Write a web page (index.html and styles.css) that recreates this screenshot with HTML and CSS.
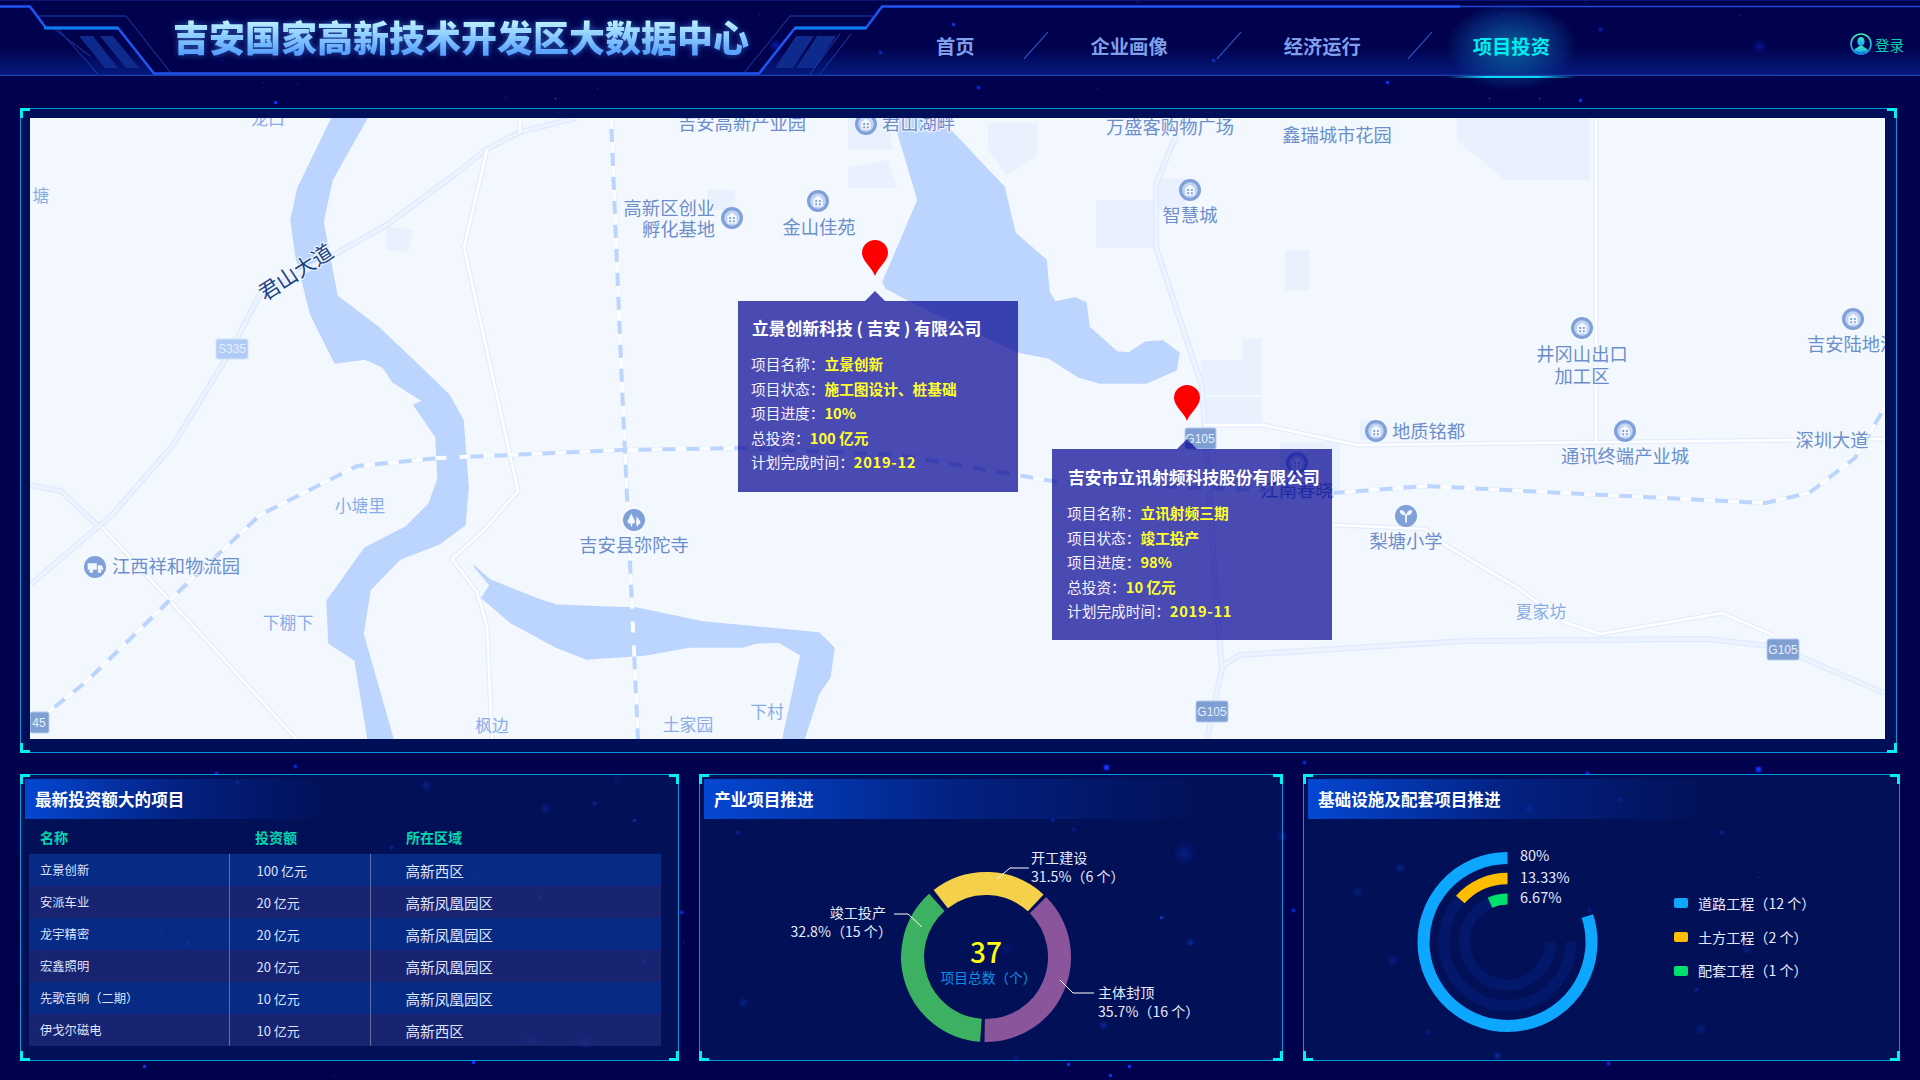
FILE: index.html
```html
<!DOCTYPE html>
<html lang="zh-CN">
<head>
  <meta charset="UTF-8">
  <title>吉安国家高新技术开发区大数据中心</title>
  <link rel="stylesheet" href="styles.css">
</head>
<body>
  <div class="stars"></div>

  <header class="top-bar">
    <!-- header line art -->
    <svg class="top-art" width="1920" height="76" viewBox="0 0 1920 76">
      <defs>
        <linearGradient id="cyanLine" x1="0" x2="1" y1="0" y2="0">
          <stop offset="0" stop-color="#1f55f0"/>
          <stop offset="0.1" stop-color="#07c3f0"/>
          <stop offset="0.9" stop-color="#07c3f0"/>
          <stop offset="1" stop-color="#1f55f0"/>
        </linearGradient>
        <linearGradient id="headGlow" x1="0" x2="0" y1="0" y2="1">
          <stop offset="0" stop-color="#05208a" stop-opacity="0"/>
          <stop offset="1" stop-color="#05208a" stop-opacity="0.8"/>
        </linearGradient>
      </defs>
      <rect class="art-top" x="0" y="0" width="1920" height="1"/>
      <polygon fill="url(#headGlow)" points="0,48 133,48 154,75 0,75"/>
      <polygon fill="url(#headGlow)" points="759,75 781,48 1920,48 1920,75"/>
      <line class="art-base" x1="0" y1="75.5" x2="1920" y2="75.5"/>
      <polygon class="art-stripe" points="79,36 93,36 118,68 105,68"/>
      <polygon class="art-stripe" points="100,36 113,36 139,68 126,68"/>
      <polygon class="art-stripe" points="796,36 814,36 793,68 775,68"/>
      <polygon class="art-stripe" points="817,36 836,36 815,68 796,68"/>
      <polyline class="art-thin" points="38,16 126,16 171,73"/>
      <polyline class="art-thin" points="57,28 98,74"/>
      <polyline class="art-thin" points="53,28 90,56"/>
      <polyline class="art-thin" points="744,73 790,16 873,16"/>
      <polyline class="art-thin" points="851,34 820,74"/>
      <polyline class="art-thin" points="840,34 810,74"/>
      <polyline class="art-main" points="0,6.5 30,6.5 46,28 118,28 154,73.5 759,73.5 795,28 866,28 882,6.5 1460,6.5"/>
      <line class="art-right" x1="1460" y1="6.5" x2="1920" y2="6.5"/>
      <line class="art-accent" x1="44" y1="28" x2="118" y2="28"/>
      <line class="art-accent" x1="795" y1="28" x2="866" y2="28"/>
      <line x1="373" y1="73.5" x2="542" y2="73.5" stroke="url(#cyanLine)" stroke-width="2.5"/>
    </svg>

    <h1 class="site-title">吉安国家高新技术开发区大数据中心</h1>

    <nav class="main-nav">
      <a class="nav-item">首页</a>
      <svg class="nav-slash" width="26" height="27" viewBox="0 0 26 27"><line x1="25" y1="0" x2="1" y2="27"/></svg>
      <a class="nav-item">企业画像</a>
      <svg class="nav-slash" width="26" height="27" viewBox="0 0 26 27"><line x1="25" y1="0" x2="1" y2="27"/></svg>
      <a class="nav-item">经济运行</a>
      <svg class="nav-slash last" width="26" height="27" viewBox="0 0 26 27"><line x1="25" y1="0" x2="1" y2="27"/></svg>
      <a class="nav-item active">项目投资</a>
    </nav>

    <div class="login">
      <svg width="22" height="22" viewBox="0 0 22 22">
        <defs>
          <linearGradient id="userGrad" x1="0" x2="0" y1="0" y2="1">
            <stop offset="0" stop-color="#3fe8b4"/>
            <stop offset="1" stop-color="#0f9bff"/>
          </linearGradient>
          <clipPath id="userClip"><circle cx="11" cy="11" r="9"/></clipPath>
        </defs>
        <circle cx="11" cy="11" r="10" fill="none" stroke="url(#userGrad)" stroke-width="1.6"/>
        <g clip-path="url(#userClip)" fill="url(#userGrad)">
          <ellipse cx="11" cy="8.5" rx="3.6" ry="4.6"/>
          <path d="M3 21 C3 15 8 15 9 13 L13 13 C14 15 19 15 19 21 Z"/>
        </g>
      </svg>
      <span>登录</span>
    </div>
  </header>

  <section class="map-frame">
    <span class="corner tl"></span><span class="corner tr"></span><span class="corner bl"></span><span class="corner br"></span>
    <div class="map">
      <svg class="map-art" width="1855" height="621" viewBox="30 118 1855 621">
        <defs>
          <symbol id="poi-building" viewBox="0 0 24 24">
            <circle cx="12" cy="12" r="12" fill="#7fa0d9"/>
            <circle cx="12" cy="12" r="8.5" fill="#c3d4f1"/>
            <path d="M7 18 V10 L12 6 L17 10 V18 Z" fill="#f3f7ff"/>
            <path d="M9 11 H11 V13 H9 Z M13 11 H15 V13 H13 Z M9 14.5 H11 V16.5 H9 Z M13 14.5 H15 V16.5 H13 Z" fill="#7fa0d9"/>
          </symbol>
          <symbol id="poi-truck" viewBox="0 0 24 24">
            <circle cx="12" cy="12" r="12" fill="#7fa0d9"/>
            <path d="M4 8 H14 V15 H4 Z M15 10 H19 L21 13 V15 H15 Z" fill="#f3f7ff"/>
            <circle cx="8" cy="16.5" r="2" fill="#f3f7ff"/>
            <circle cx="17" cy="16.5" r="2" fill="#f3f7ff"/>
          </symbol>
          <symbol id="poi-tree" viewBox="0 0 24 24">
            <circle cx="12" cy="12" r="12" fill="#7fa0d9"/>
            <path d="M9 5 L13 13 Q13.5 16 10 16 H8 Q4.5 16 5 13 Z M15 8 L19 14 Q19.5 17 16 17 H14 L14.5 12 Z" fill="#f3f7ff"/>
            <rect x="8.5" y="15" width="1.6" height="4" fill="#f3f7ff"/>
            <rect x="15" y="16" width="1.6" height="3" fill="#f3f7ff"/>
          </symbol>
          <symbol id="poi-school" viewBox="0 0 24 24">
            <circle cx="12" cy="12" r="12" fill="#7fa0d9"/>
            <path d="M5 6 Q11 5 11.5 11 Q6 12 5 6 Z M19 6 Q13 5 12.5 11 Q18 12 19 6 Z" fill="#f3f7ff"/>
            <rect x="11" y="10" width="2" height="9" fill="#f3f7ff"/>
          </symbol>
          <g id="pale-roads">
            <polyline points="576,118 520,132 485,150 462,169 388,224 332,256 260,294 230,352 173,445 112,515 31,584"/>
            <polyline points="30,485 61,491 97,525"/>
            <polyline points="1176,136 1156,184 1156,247 1202,386 1217,605 1222,668 1207,739"/>
            <polyline points="1222,666 1240,655 1464,641 1707,639 1778,647 1884,693"/>
          </g>
          <g id="white-roads">
            <polyline points="487,150 464,247 518,491 485,529 452,559 477,592 487,626 492,739"/>
            <polyline points="102,527 209,643 296,739"/>
            <polyline points="1204,425 1263,425 1357,445 1884,439"/>
            <polyline points="1596,118 1596,441"/>
            <polyline points="1334,525 1426,529 1447,546 1518,588 1564,622 1600,634 1722,613 1773,635"/>
            <polyline points="1190,118 1176,136"/>
            <polyline points="520,118 520,132"/>
          </g>
          <g id="rail-lines">
            <polyline points="46,714 87,681 173,597 260,515 357,466 439,458 622,450 740,448 900,455 1058,482 1334,493 1426,486 1765,503 1809,493 1855,458 1885,407"/>
            <polyline points="611,118 622,386 638,739"/>
          </g>
        </defs>

        <!-- blocks -->
        <g class="block">
          <polygon points="988,123 1037,123 1037,157 1006,175 988,150"/>
          <polygon points="848,118 890,118 892,150 848,150"/>
          <polygon points="848,167 888,160 897,188 848,188"/>
          <rect x="1096" y="200" width="57" height="48"/>
          <rect x="1285" y="250" width="24" height="40"/>
          <rect x="1243" y="339" width="19" height="21"/>
          <rect x="1201" y="360" width="61" height="35"/>
          <rect x="1203" y="397" width="59" height="28"/>
          <polygon points="386,226 413,230 408,252 386,250"/>
          <rect x="707" y="190" width="28" height="20"/>
          <polygon points="1457,118 1590,118 1590,180 1505,180 1457,140"/>
          <rect x="1156" y="178" width="30" height="32" rx="4"/>
          <rect x="1280" y="442" width="60" height="50"/>
          <rect x="1360" y="420" width="20" height="20"/>
        </g>

        <!-- water -->
        <g class="water">
          <polygon points="332,118 298,188 291,220 296,256 311,315 335,363 365,359 383,367 393,382 423,401 414,405 436,437 438,479 429,504 406,527 365,548 327,601 329,643 355,660 368,739 393,739 363,634 370,590 400,559 439,544 465,525 468,487 463,420 449,395 418,365 378,327 337,296 323,222 332,180 367,118"/>
          <polygon points="474,566 490,580 540,600 556,605 600,607 636,608 703,622 819,633 834,648 830,677 819,693 804,739 783,739 801,655 779,642 756,643 743,647 689,647 645,655 600,658 587,659 556,647 510,622 482,598 490,585"/>
          <polygon points="895,118 898,133 918,200 883,282 886,288 912,302 1018,352 1049,358 1079,377 1100,383 1146,383 1176,370 1179,353 1163,341 1146,342 1129,353 1117,352 1089,327 1086,303 1075,298 1055,302 1049,292 1046,260 1015,233 1004,187 953,133 939,118"/>
        </g>

        <!-- roads -->
        <use class="road-edge" href="#pale-roads"/>
        <use class="road-fill" href="#pale-roads"/>
        <use class="road-white-edge" href="#white-roads"/>
        <use class="road-white" href="#white-roads"/>
        <use class="rail-base" href="#rail-lines"/>
        <use class="rail-dash" href="#rail-lines"/>

        <!-- badges -->
        <g class="badge light"><rect x="216" y="339" width="32" height="20" rx="2"/><text x="232" y="349">S335</text></g>
        <g class="badge"><rect x="30" y="712" width="19" height="21" rx="2"/><text x="39" y="723">45</text></g>
        <g class="badge"><rect x="1185" y="428" width="31" height="21" rx="2"/><text x="1200" y="439">G105</text></g>
        <g class="badge"><rect x="1767" y="639" width="32" height="21" rx="2"/><text x="1783" y="650">G105</text></g>
        <g class="badge"><rect x="1196" y="701" width="32" height="21" rx="2"/><text x="1212" y="712">G105</text></g>

        <!-- poi icons -->
        <use href="#poi-truck" x="84" y="556" width="22" height="22"/>
        <use href="#poi-tree" x="623" y="509" width="22" height="22"/>
        <use href="#poi-building" x="721" y="207" width="22" height="22"/>
        <use href="#poi-building" x="807" y="190" width="22" height="22"/>
        <use href="#poi-building" x="855" y="113" width="22" height="22"/>
        <use href="#poi-building" x="1179" y="179" width="22" height="22"/>
        <use href="#poi-building" x="1571" y="317" width="22" height="22"/>
        <use href="#poi-building" x="1842" y="308" width="22" height="22"/>
        <use href="#poi-building" x="1365" y="420" width="22" height="22"/>
        <use href="#poi-building" x="1614" y="420" width="22" height="22"/>
        <use href="#poi-building" x="1286" y="452" width="22" height="22"/>
        <use href="#poi-school" x="1395" y="505" width="22" height="22"/>

        <!-- labels -->
        <g class="label">
          <text x="634" y="544" text-anchor="middle">吉安县弥陀寺</text>
          <text x="112" y="565">江西祥和物流园</text>
          <text x="715" y="207" text-anchor="end">高新区创业</text>
          <text x="715" y="228" text-anchor="end">孵化基地</text>
          <text x="819" y="226" text-anchor="middle">金山佳苑</text>
          <text x="742" y="122" text-anchor="middle">吉安高新产业园</text>
          <text x="882" y="122">君山湖畔</text>
          <text x="1170" y="126" text-anchor="middle">万盛客购物广场</text>
          <text x="1337" y="134" text-anchor="middle">鑫瑞城市花园</text>
          <text x="1190" y="214" text-anchor="middle">智慧城</text>
          <text x="1582" y="353" text-anchor="middle">井冈山出口</text>
          <text x="1582" y="375" text-anchor="middle">加工区</text>
          <text x="1807" y="343">吉安陆地港</text>
          <text x="1392" y="430">地质铭都</text>
          <text x="1625" y="455" text-anchor="middle">通讯终端产业城</text>
          <text x="1832" y="439" text-anchor="middle">深圳大道</text>
          <text x="1297" y="489" text-anchor="middle">江南春晓</text>
          <text x="1406" y="540" text-anchor="middle">梨塘小学</text>
        </g>
        <g class="label-small">
          <text x="268" y="118" text-anchor="middle">龙口</text>
          <text x="41" y="195" text-anchor="middle">塘</text>
          <text x="360" y="505" text-anchor="middle">小塘里</text>
          <text x="288" y="622" text-anchor="middle">下棚下</text>
          <text x="492" y="725" text-anchor="middle">枫边</text>
          <text x="688" y="724" text-anchor="middle">土家园</text>
          <text x="767" y="711" text-anchor="middle">下村</text>
          <text x="1541" y="611" text-anchor="middle">夏家坊</text>
        </g>
        <text class="label-road" transform="translate(295 271) rotate(-33)" text-anchor="middle">君山大道</text>
      </svg>

      <svg class="pin pin-a" width="26" height="36" viewBox="0 0 26 36"><path d="M13 36 C11 29 0 21 0 13 A13 13 0 0 1 26 13 C26 21 15 29 13 36 Z"/></svg>
      <svg class="pin pin-b" width="26" height="36" viewBox="0 0 26 36"><path d="M13 36 C11 29 0 21 0 13 A13 13 0 0 1 26 13 C26 21 15 29 13 36 Z"/></svg>

      <div class="popup popup-a">
        <h3>立景创新科技 ( 吉安 ) 有限公司</h3>
        <p>项目名称：<b>立景创新</b></p>
        <p>项目状态：<b>施工图设计、桩基础</b></p>
        <p>项目进度：<b>10%</b></p>
        <p>总投资：<b>100 亿元</b></p>
        <p>计划完成时间：<b class="date">2019-12</b></p>
      </div>
      <div class="popup popup-b">
        <h3>吉安市立讯射频科技股份有限公司</h3>
        <p>项目名称：<b>立讯射频三期</b></p>
        <p>项目状态：<b>竣工投产</b></p>
        <p>项目进度：<b>98%</b></p>
        <p>总投资：<b>10 亿元</b></p>
        <p>计划完成时间：<b class="date">2019-11</b></p>
      </div>
    </div>
  </section>

  <section class="panels">
    <div class="panel panel-list">
      <span class="corner tl"></span><span class="corner tr"></span><span class="corner bl"></span><span class="corner br"></span>
      <h2 class="panel-title">最新投资额大的项目</h2>
      <table class="project-table">
        <thead>
          <tr><th>名称</th><th>投资额</th><th>所在区域</th></tr>
        </thead>
        <tbody>
          <tr><td class="c-name">立景创新</td><td class="c-amount">100 亿元</td><td class="c-area">高新西区</td></tr>
          <tr><td class="c-name">安派车业</td><td class="c-amount">20 亿元</td><td class="c-area">高新凤凰园区</td></tr>
          <tr><td class="c-name">龙宇精密</td><td class="c-amount">20 亿元</td><td class="c-area">高新凤凰园区</td></tr>
          <tr><td class="c-name">宏鑫照明</td><td class="c-amount">20 亿元</td><td class="c-area">高新凤凰园区</td></tr>
          <tr><td class="c-name">先歌音响（二期）</td><td class="c-amount">10 亿元</td><td class="c-area">高新凤凰园区</td></tr>
          <tr><td class="c-name">伊戈尔磁电</td><td class="c-amount">10 亿元</td><td class="c-area">高新西区</td></tr>
        </tbody>
      </table>
    </div>

    <div class="panel panel-donut">
      <span class="corner tl"></span><span class="corner tr"></span><span class="corner bl"></span><span class="corner br"></span>
      <h2 class="panel-title">产业项目推进</h2>
      <svg class="chart" width="582" height="241" viewBox="700 819 582 241">
        <g class="donut">
          <path stroke="#f5d14a" d="M940.75 899.1 A73.5 73.5 0 0 1 1035.75 902.9"/>
          <path stroke="#8b559b" d="M1037.97 905.03 A73.5 73.5 0 0 1 984.7 1030.5"/>
          <path stroke="#3cb161" d="M980.9 1030.3 A73.5 73.5 0 0 1 936.8 902.4"/>
        </g>
        <g class="leader">
          <polyline points="997,879 1010,868 1029,868"/>
          <polyline points="922,927 908,914 894,914"/>
          <polyline points="1060,980 1073,993 1094,993"/>
        </g>
        <text class="total-num" x="986" y="951" text-anchor="middle">37</text>
        <text class="total-cap" x="988.5" y="976.5" text-anchor="middle">项目总数（个）</text>
        <g class="chart-text">
          <text x="1031" y="857">开工建设</text>
          <text x="1031" y="876">31.5%（6 个）</text>
          <text x="886" y="912" text-anchor="end">竣工投产</text>
          <text x="892" y="931" text-anchor="end">32.8%（15 个）</text>
          <text x="1098" y="992">主体封顶</text>
          <text x="1098" y="1011">35.7%（16 个）</text>
        </g>
      </svg>
    </div>

    <div class="panel panel-rings">
      <span class="corner tl"></span><span class="corner tr"></span><span class="corner bl"></span><span class="corner br"></span>
      <h2 class="panel-title">基础设施及配套项目推进</h2>
      <svg class="chart" width="595" height="241" viewBox="1304 819 595 241">
        <g class="rings">
          <path stroke="#03186a" stroke-width="11" d="M1507.5 878.5 A63.5 63.5 0 1 0 1571 942"/>
          <path stroke="#03186a" stroke-width="11" d="M1507.5 899 A43 43 0 1 0 1550.5 942"/>
          <path stroke="#0ea7ff" stroke-width="12" d="M1507.5 858 A84 84 0 1 0 1587.4 916"/>
          <path stroke="#ffbd00" stroke-width="11.5" d="M1507.5 878.5 A63.5 63.5 0 0 0 1460.3 899.5"/>
          <path stroke="#00e06c" stroke-width="11" d="M1507.5 899 A43 43 0 0 0 1490 902.7"/>
        </g>
        <g class="chart-text">
          <text class="pct" x="1520" y="854">80%</text>
          <text class="pct" x="1520" y="876">13.33%</text>
          <text class="pct" x="1520" y="896">6.67%</text>
          <text x="1698" y="903">道路工程（12 个）</text>
          <text x="1698" y="937">土方工程（2 个）</text>
          <text x="1698" y="970">配套工程（1 个）</text>
        </g>
        <rect x="1674" y="898" width="14" height="10" rx="2" fill="#0ea7ff"/>
        <rect x="1674" y="932" width="14" height="10" rx="2" fill="#ffbd00"/>
        <rect x="1674" y="966" width="14" height="10" rx="2" fill="#00e06c"/>
      </svg>
    </div>
  </section>
</body>
</html>
```

FILE: styles.css
```css
* { box-sizing: border-box; }

body {
  position: relative;
  width: 1920px;
  height: 1080px;
  margin: 0;
  overflow: hidden;
  background: #01024e;
  color: #e2e7ff;
  font-family: "Noto Sans CJK SC", sans-serif;
}

/* background stars */
.stars {
  position: absolute;
  left: 0;
  top: 0;
  width: 1px;
  height: 1px;
  box-shadow:
    275px 102px 1px 1px #1038ff, 505px 97px 1px 0 #1a50ff, 555px 98px 1px 0 #6aa0ff, 263px 82px 1px 0 #1038ff,
    297px 83px 1px 0 #1038ff, 597px 88px 1px 0 #1038ff, 222px 60px 1px 0 #1038ff, 775px 45px 5px 2px #1038f0,
    759px 14px 1px 0 #1038ff, 1759px 46px 6px 2px #1038ff, 1600px 29px 3px 1px #1038e0, 1539px 98px 1px 0 #5a90ff,
    1489px 98px 1px 0 #5a90ff, 1580px 100px 1px 1px #1038ff, 978px 87px 2px 1px #1038ff, 1387px 82px 1px 1px #1038ff,
    1097px 88px 1px 0 #1038ff, 880px 52px 2px 1px #1038e0, 1213px 60px 1px 1px #1038e0, 953px 24px 1px 1px #1038e0,
    1502px 15px 1px 0 #1038ff, 1739px 15px 1px 0 #1038ff, 1137px 2px 1px 0 #1038ff, 1585px 2px 1px 0 #1038ff,
    295px 766px 2px 1px #1038ff, 216px 773px 2px 1px #1038ff, 426px 785px 4px 2px #1038e0, 616px 778px 4px 1px #1038e0,
    545px 808px 5px 2px #1038e0, 475px 875px 4px 2px #1038e0, 681px 912px 2px 1px #1038ff, 585px 1042px 6px 3px #1038e0,
    531px 1040px 4px 2px #1038e0, 540px 896px 2px 1px #1038e0, 391px 847px 2px 1px #1038e0, 237px 782px 2px 1px #1038e0,
    161px 933px 3px 1px #1038e0, 187px 943px 1px 1px #1038e0, 144px 1066px 1px 1px #1038ff, 333px 1075px 1px 0 #1038ff,
    473px 1062px 1px 1px #1038ff, 594px 803px 2px 1px #1038e0, 643px 960px 2px 1px #1038e0, 634px 820px 1px 1px #1038e0,
    683px 942px 1px 0 #1038ff, 1106px 767px 2px 2px #1038ff, 1184px 853px 8px 4px #1038f0, 1073px 829px 3px 1px #1038f0,
    1281px 836px 4px 2px #1038f0, 1190px 942px 3px 2px #1038e0, 1006px 948px 6px 2px #1038d0, 743px 1002px 4px 2px #1038e0,
    1103px 1025px 3px 2px #1038e0, 737px 832px 2px 1px #1038f0, 1015px 1058px 3px 1px #1038f0, 1068px 1064px 1px 1px #1038ff,
    1110px 1075px 1px 1px #1038ff, 1129px 1066px 1px 1px #1038ff, 1161px 917px 1px 1px #1a50ff, 1293px 910px 2px 1px #1038ff,
    1052px 820px 2px 1px #1038f0, 1758px 769px 2px 2px #1038ff, 1587px 773px 2px 1px #1038ff, 1304px 762px 2px 1px #1038ff,
    1529px 808px 4px 2px #1038e0, 1619px 799px 3px 1px #1038f0, 1400px 867px 4px 2px #1038e0, 1357px 891px 5px 2px #1038e0,
    1392px 960px 4px 2px #1038e0, 1746px 949px 5px 2px #1038e0, 1700px 1029px 5px 2px #1038e0, 1497px 1055px 3px 2px #1038e0,
    1427px 1032px 3px 1px #1038f0, 1696px 989px 2px 1px #1038f0, 1721px 832px 2px 1px #1038f0, 1758px 877px 1px 0 #3a70ff,
    1589px 910px 3px 1px #1038f0, 1608px 1063px 2px 1px #1038f0;
}

/* header */
.top-bar {
  position: relative;
  display: flex;
  height: 76px;
}

.top-art {
  position: absolute;
  left: 0;
  top: 0;
}

.art-top { fill: #0a1670; }
.art-base { stroke: #1d3fa8; stroke-width: 1.5; }
.art-stripe { fill: #0e2a8c; }
.art-thin { fill: none; stroke: #1a3ea8; stroke-width: 1; }
.art-main { fill: none; stroke: #1f55f0; stroke-width: 2.5; }
.art-right { stroke: #1a48d8; stroke-width: 1.5; }
.art-accent { stroke: #0a7cf0; stroke-width: 3; }

.site-title {
  position: relative;
  margin: 0 0 0 173px;
  width: 576px;
  height: 73px;
  font-size: 36px;
  font-weight: 900;
  line-height: 73px;
  white-space: nowrap;
  background: linear-gradient(180deg, #bdf3ff 28%, #5aa2ff 72%);
  -webkit-background-clip: text;
  background-clip: text;
  color: transparent;
  filter: drop-shadow(0 0 3px rgba(80, 160, 255, 0.55));
}

.main-nav {
  position: relative;
  z-index: 0;
  display: flex;
  align-items: center;
  height: 76px;
  margin-left: 187px;
  padding-top: 15px;
}

.nav-item {
  position: relative;
  font-size: 19.3px;
  font-weight: 700;
  color: #7f9fea;
  white-space: nowrap;
}

.nav-slash {
  margin: 0 42px 0 48px;
  line { stroke: #2a4db8; stroke-width: 1.2; }
}

.nav-slash.last { margin: 0 40px 0 46px; }

.nav-item.active { color: #00eef0; }

.nav-item.active::before {
  content: "";
  position: absolute;
  left: -26px;
  right: -26px;
  top: -28px;
  height: 86px;
  background: radial-gradient(ellipse at 50% 50%, rgba(10, 110, 170, 0.85) 0, rgba(10, 80, 160, 0.4) 50%, transparent 72%);
  z-index: -1;
}

.nav-item.active::after {
  content: "";
  position: absolute;
  left: -26px;
  right: -26px;
  top: 44px;
  height: 2px;
  background: linear-gradient(90deg, transparent, #10d8f0 30%, #10d8f0 70%, transparent);
}

.login {
  position: absolute;
  left: 1850px;
  top: 33px;
  display: flex;
  align-items: center;
  gap: 3px;
  font-size: 14.5px;
  color: #00d0b0;
  svg { display: block; }
}

/* frames with cyan corners */
.map-frame,
.panel {
  position: relative;
  border: 1px solid #0696dc;
}

.corner {
  position: absolute;
  width: 10px;
  height: 10px;
  border: 0 solid #00f0f5;
}

.corner.tl { left: -1px; top: -1px; border-width: 3px 0 0 3px; }
.corner.tr { right: -1px; top: -1px; border-width: 3px 3px 0 0; }
.corner.bl { left: -1px; bottom: -1px; border-width: 0 0 3px 3px; }
.corner.br { right: -1px; bottom: -1px; border-width: 0 3px 3px 0; }

/* map */
.map-frame {
  width: 1877px;
  height: 645px;
  margin: 32px 0 0 20px;
  padding: 9px 11px 13px 9px;
  background: rgba(2, 22, 92, 0.7);
}

.map {
  position: relative;
  width: 1855px;
  height: 621px;
  overflow: hidden;
  background: #f3f8ff;
}

.map-art { display: block; }

.block { fill: #e9f1fe; }
.water { fill: #bcd5fe; stroke: #bcd5fe; stroke-width: 1.5; stroke-linejoin: round; }

.road-edge,
.road-fill,
.road-white-edge,
.road-white,
.rail-base,
.rail-dash {
  fill: none;
  stroke-linejoin: round;
}

.road-edge { stroke: #e0ebfd; stroke-width: 6; }
.road-fill { stroke: #eef4ff; stroke-width: 3; }
.road-white-edge { stroke: #e4edfd; stroke-width: 5; }
.road-white { stroke: #ffffff; stroke-width: 2.5; }
.rail-base { stroke: #bcd5fe; stroke-width: 4; }
.rail-dash { stroke: #fbfdff; stroke-width: 4; stroke-dasharray: 11 13; }

.badge rect { fill: #7f9fd2; stroke: #b6cbee; stroke-width: 1; }
.badge text {
  fill: #e6efff;
  font-family: "Liberation Sans", sans-serif;
  font-size: 12px;
  text-anchor: middle;
  dominant-baseline: central;
}
.badge.light rect { fill: #b0cbf5; stroke: #d5e3fa; }

.label text,
.label-small text {
  dominant-baseline: central;
  paint-order: stroke;
  stroke: #f3f8ff;
  stroke-width: 2px;
}

.label text { font-size: 18.3px; fill: #6c8ecb; }
.label-small text { font-size: 16.8px; fill: #8aace6; }

.label-road {
  font-size: 21px;
  fill: #1d4288;
  dominant-baseline: central;
  paint-order: stroke;
  stroke: #f3f8ff;
  stroke-width: 2px;
}

.pin {
  position: absolute;
  path { fill: #ff0000; }
}

.pin-a { left: 832px; top: 122px; }
.pin-b { left: 1144px; top: 267px; }

.popup {
  position: absolute;
  width: 280px;
  height: 191px;
  background: rgba(0, 0, 146, 0.7);
  color: #f2f2ff;

  &::before {
    content: "";
    position: absolute;
    top: -10px;
    width: 0;
    height: 0;
    border-left: 10px solid transparent;
    border-right: 10px solid transparent;
    border-bottom: 10px solid rgba(0, 0, 146, 0.7);
  }

  h3 {
    margin: 0 0 11px 1px;
    font-size: 16.8px;
    font-weight: 700;
    line-height: 26px;
    color: #fff;
    white-space: nowrap;
  }

  p {
    margin: 0;
    font-size: 14.7px;
    line-height: 24.5px;
    white-space: nowrap;
  }

  b {
    color: #ffff2e;
    font-weight: 700;
  }

  .date { letter-spacing: 0.7px; }
}

.popup-a { left: 708px; top: 183px; padding: 14px 0 0 13px; }
.popup-a::before { left: 127px; }
.popup-b { left: 1022px; top: 331px; padding: 15px 0 0 15px; }
.popup-b::before { left: 125px; }

/* bottom panels */
.panels {
  display: flex;
  gap: 20px;
  margin: 21px 0 0 20px;
}

.panel {
  height: 287px;
  background: rgba(3, 30, 95, 0.5);
}

.panel-list { width: 659px; }
.panel-donut { width: 584px; }
.panel-rings { width: 597px; }

.panel-title {
  height: 40px;
  margin: 4px 4px 0;
  padding-left: 10px;
  font-size: 16.6px;
  font-weight: 700;
  line-height: 40px;
  color: #fff;
  background: linear-gradient(90deg, #0447d2 0, rgba(4, 50, 170, 0.5) 50%, transparent 100%);
}

.panel-list .panel-title { width: 305px; }
.panel-donut .panel-title { width: 505px; }
.panel-rings .panel-title { width: 405px; }

.project-table {
  width: 632px;
  margin-left: 8px;
  border-collapse: collapse;
  table-layout: fixed;

  th {
    height: 35px;
    padding: 0 0 0 11px;
    font-size: 14px;
    font-weight: 700;
    color: #00d8b0;
    text-align: left;
  }

  th:first-child { width: 200px; }
  th:nth-child(2) { width: 141px; padding-left: 26px; }
  th:nth-child(3) { padding-left: 36px; }

  td {
    height: 32px;
    padding: 0;
    white-space: nowrap;
    color: #dfe4ff;
    border-right: 1px solid rgba(255, 255, 255, 0.35);
  }

  td:last-child { border-right: 0; }

  tbody tr:nth-child(odd) { background: rgba(10, 54, 150, 0.72); }
  tbody tr:nth-child(even) { background: rgba(40, 50, 130, 0.6); }
}

.c-name { padding-left: 11px !important; font-size: 12.3px; }
.c-amount { padding-left: 27px !important; font-size: 13px; }
.c-area { padding-left: 35px !important; font-size: 14.6px; }

.chart { display: block; }

.donut path {
  fill: none;
  stroke-width: 23;
}

.leader polyline {
  fill: none;
  stroke: #fff;
  stroke-width: 1;
}

.total-num {
  font-size: 28px;
  font-weight: 500;
  fill: #ffff14;
  dominant-baseline: central;
}

.total-cap {
  font-size: 13.7px;
  fill: #0a90e4;
  dominant-baseline: central;
}

.chart-text text {
  font-size: 14.1px;
  fill: #e6eaff;
  dominant-baseline: central;
}

.chart-text .pct { font-size: 14.5px; }

.rings path { fill: none; }
```
